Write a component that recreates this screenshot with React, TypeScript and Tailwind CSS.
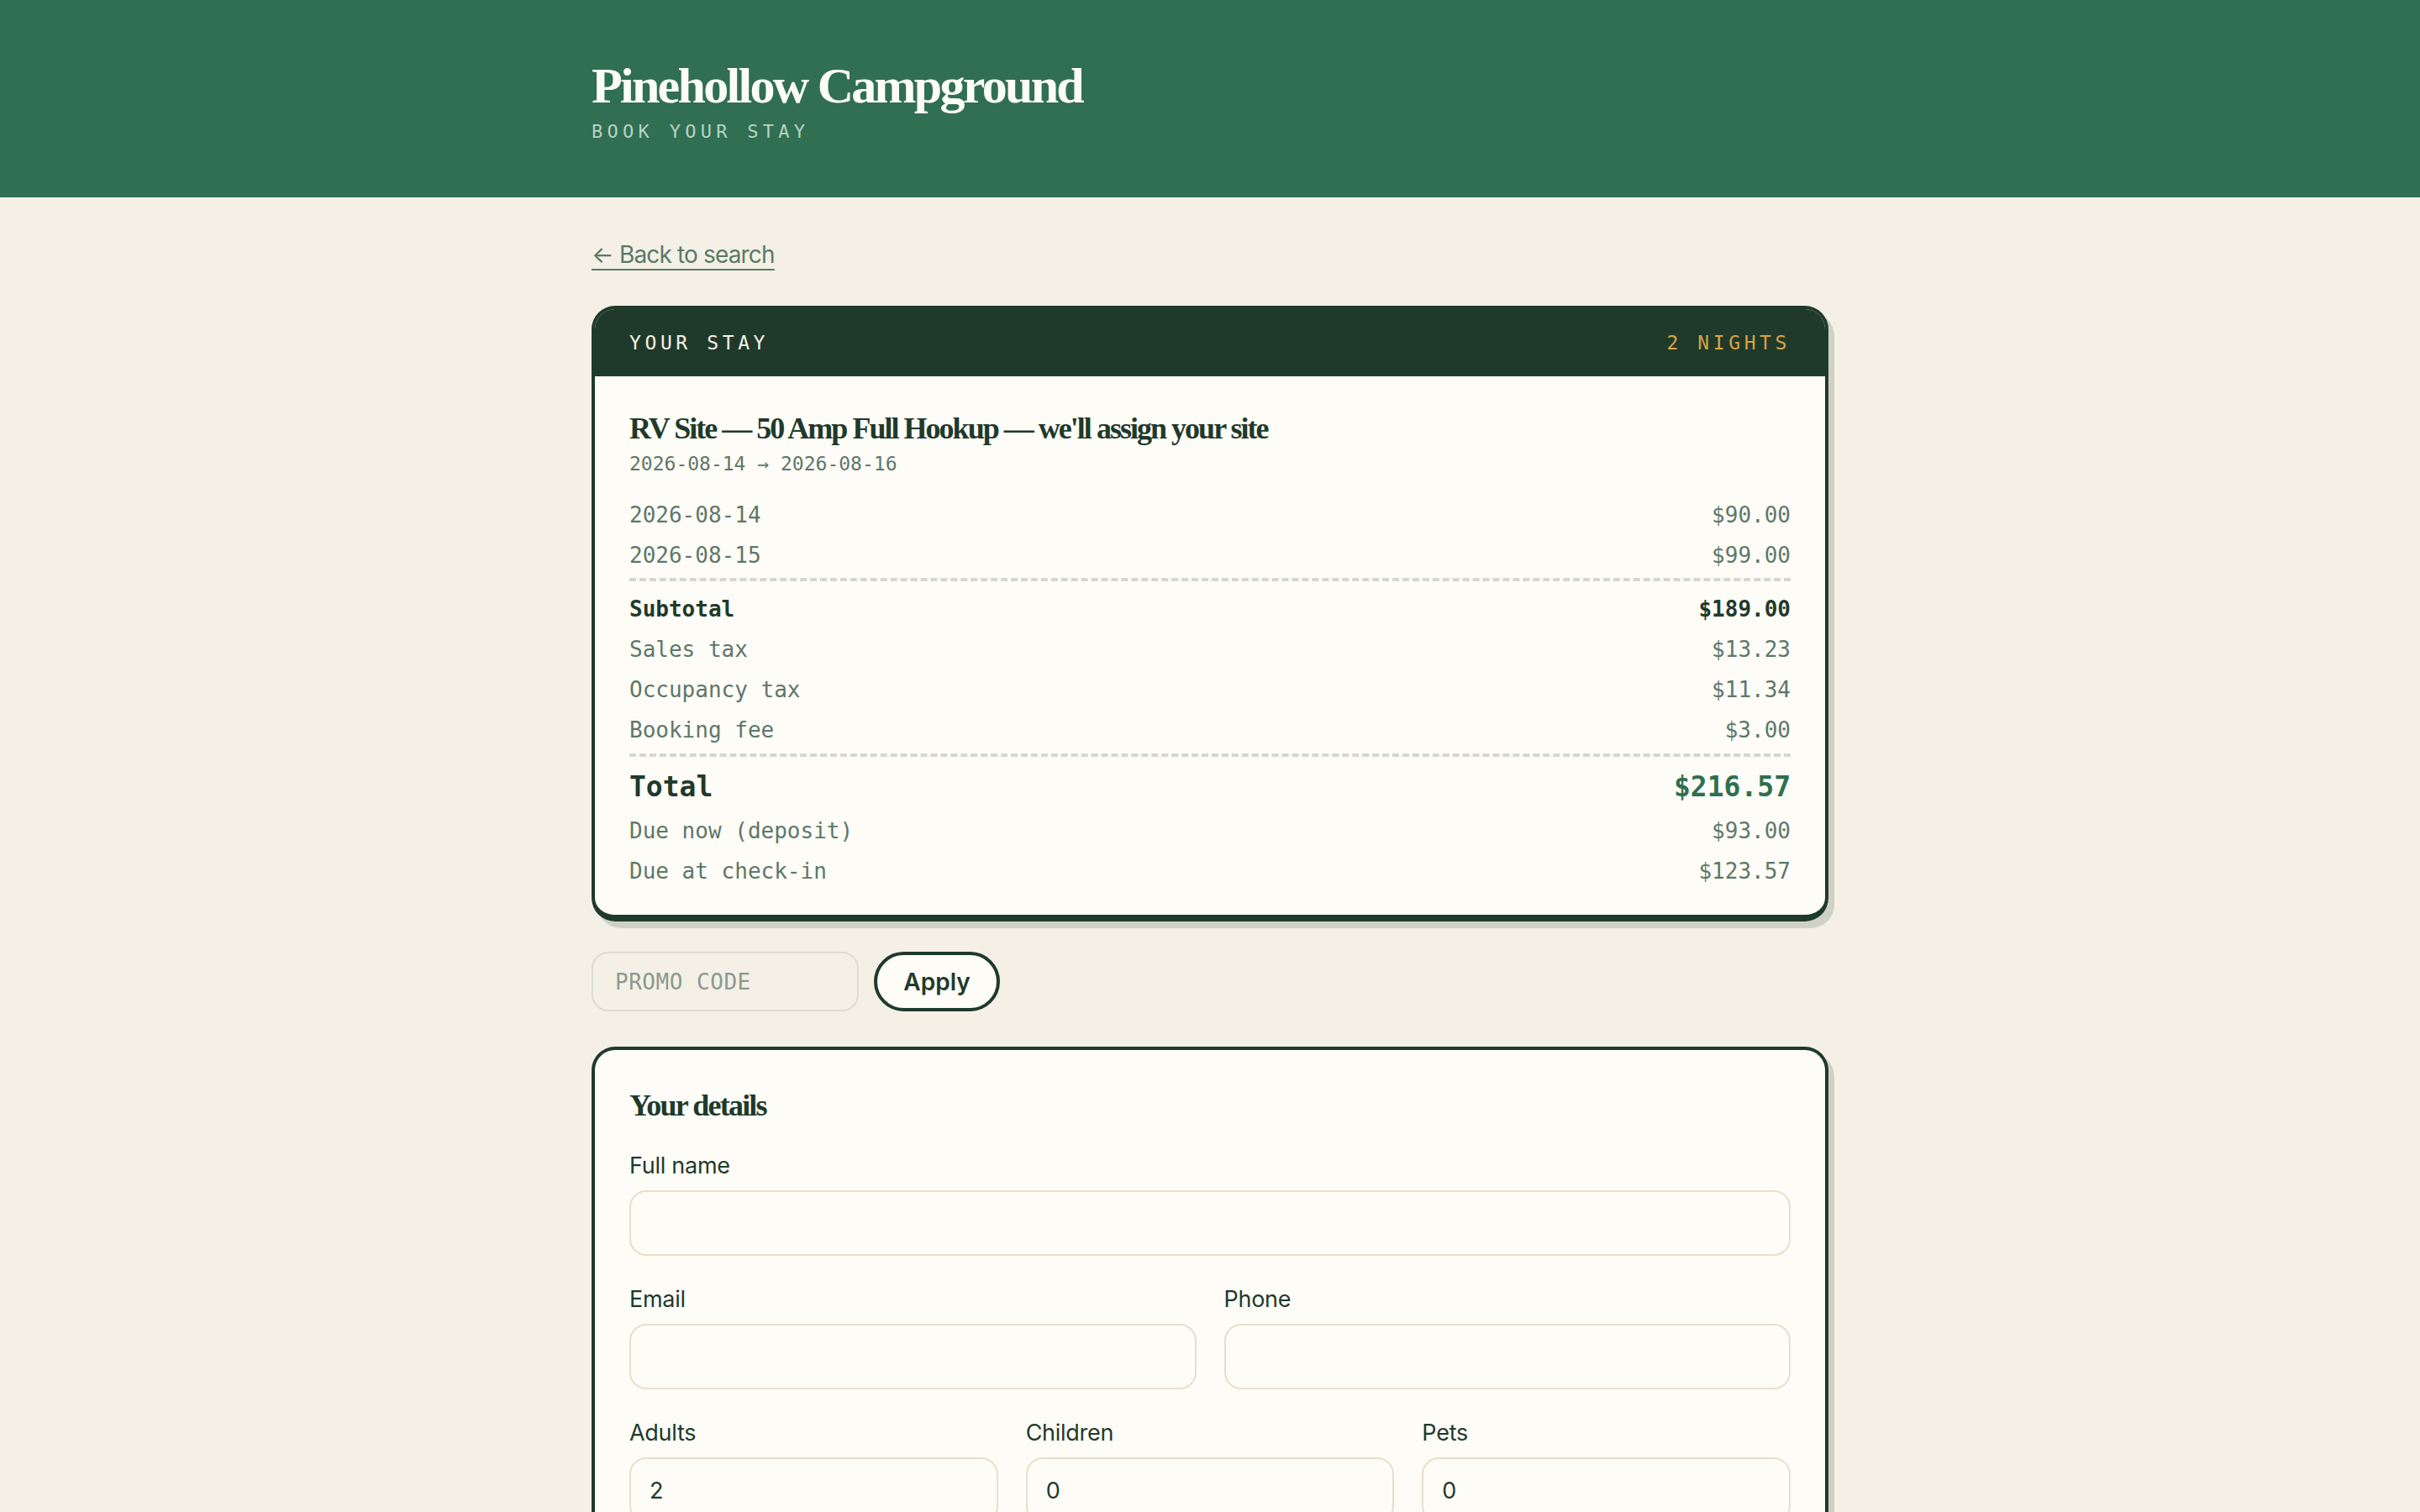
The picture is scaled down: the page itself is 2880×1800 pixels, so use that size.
import React from 'react';

const serif = "font-['Liberation_Serif',serif]";
const mono = "font-['DejaVu_Sans_Mono',monospace]";
const sans = "font-['Inter',sans-serif]";

function Row({ label, amount, strong }: { label: string; amount: string; strong?: boolean }) {
  return (
    <div className={`flex h-12 items-center justify-between text-[26px] ${strong ? 'font-bold text-[#1f3a2b]' : 'text-[#5d7868]'}`}>
      <span>{label}</span>
      <span>{amount}</span>
    </div>
  );
}

function Field({ label, value }: { label: string; value?: string }) {
  return (
    <div className="flex flex-col">
      <label className={`${sans} mb-3 text-[27px] leading-[34px] tracking-[-0.01em] text-[#1f3a2b]`}>{label}</label>
      <input
        defaultValue={value}
        className={`${sans} h-[78px] w-full rounded-[20px] border-2 border-[#e8dfca] bg-[#fdfcf7] px-[22px] text-[27px] text-[#1f3a2b] outline-none`}
      />
    </div>
  );
}

export default function App() {
  return (
    <div className="min-h-screen bg-[#f4f0e6] pb-24">
      {/* Header */}
      <div className="h-[235px] bg-[#306f52]">
        <div className="mx-auto w-[1472px] pt-[72px]">
          <h1 className={`${serif} text-[60px] leading-none font-bold tracking-[-0.045em] text-[#fdfcf7]`}>
            Pinehollow Campground
          </h1>
          <p className={`${mono} mt-[14px] text-[22px] leading-none tracking-[0.24em] text-[#b9d2c2]`}>BOOK YOUR STAY</p>
        </div>
      </div>

      <div className="mx-auto w-[1472px]">
        <div className="pt-[50px]">
          <a
            href="#"
            className={`${sans} text-[28px] leading-[36px] tracking-[-0.03em] text-[#5a7a66] underline decoration-2 underline-offset-[7px]`}
          >
            ← Back to search
          </a>
        </div>

        {/* Stay summary */}
        <div className="mt-[43px] overflow-hidden rounded-[28px] border-4 border-b-8 border-[#1f3a2b] bg-[#fdfcf7] shadow-[7px_8px_0_#d0d1c6]">
          <div className={`${mono} flex h-[80px] items-center justify-between bg-[#1f3a2b] px-[41px] text-[23px] tracking-[0.2em]`}>
            <span className="text-[#f4f0e6]">YOUR STAY</span>
            <span className="text-[#d9a441]">2 NIGHTS</span>
          </div>
          <div className="px-[41px] pt-[40px] pb-7">
            <h2 className={`${serif} text-[36px] leading-[45px] font-bold tracking-[-0.055em] text-[#1f3a2b]`}>
              RV Site — 50 Amp Full Hookup — we'll assign your site
            </h2>
            <p className={`${mono} mt-[3px] text-[23px] leading-[32px] text-[#5d7868]`}>2026-08-14 → 2026-08-16</p>

            <div className={`${mono} mt-[21px]`}>
              <Row label="2026-08-14" amount="$90.00" />
              <Row label="2026-08-15" amount="$99.00" />
              <div className="mt-[3px] mb-[9px] border-t-4 border-dashed border-[#d6d6ce]" />
              <Row label="Subtotal" amount="$189.00" strong />
              <Row label="Sales tax" amount="$13.23" />
              <Row label="Occupancy tax" amount="$11.34" />
              <Row label="Booking fee" amount="$3.00" />
              <div className="mt-1 mb-2 border-t-4 border-dashed border-[#d6d6ce]" />
              <div className="flex h-14 items-center justify-between text-[33px] font-bold">
                <span className="text-[#1f3a2b]">Total</span>
                <span className="text-[#2f6f4f]">$216.57</span>
              </div>
              <Row label="Due now (deposit)" amount="$93.00" />
              <Row label="Due at check-in" amount="$123.57" />
            </div>
          </div>
        </div>

        {/* Promo */}
        <div className="mt-9 flex items-center gap-[18px]">
          <input
            placeholder="PROMO CODE"
            className={`${mono} h-[71px] w-[318px] rounded-[20px] border-2 border-[#dcdcd2] bg-transparent px-[26px] text-[26px] tracking-[0.02em] text-[#1f3a2b] outline-none placeholder:text-[#8b998c]`}
          />
          <button className={`${sans} h-[71px] w-[150px] rounded-full border-4 border-[#1f3a2b] bg-[#fdfcf7] text-[28px] font-semibold text-[#1f3a2b]`}>
            Apply
          </button>
        </div>

        {/* Details */}
        <div className="mt-[42px] rounded-[28px] border-4 border-b-8 border-[#1f3a2b] bg-[#fdfcf7] px-[41px] pt-[44px] pb-12 shadow-[7px_8px_0_#d0d1c6]">
          <h2 className={`${serif} text-[36px] leading-[45px] font-bold tracking-[-0.05em] text-[#1f3a2b]`}>Your details</h2>
          <div className="mt-8 flex flex-col gap-[35px]">
            <Field label="Full name" />
            <div className="grid grid-cols-2 gap-x-[33px]">
              <Field label="Email" />
              <Field label="Phone" />
            </div>
            <div className="grid grid-cols-3 gap-x-[33px]">
              <Field label="Adults" value="2" />
              <Field label="Children" value="0" />
              <Field label="Pets" value="0" />
            </div>
          </div>
        </div>
      </div>
    </div>
  );
}
